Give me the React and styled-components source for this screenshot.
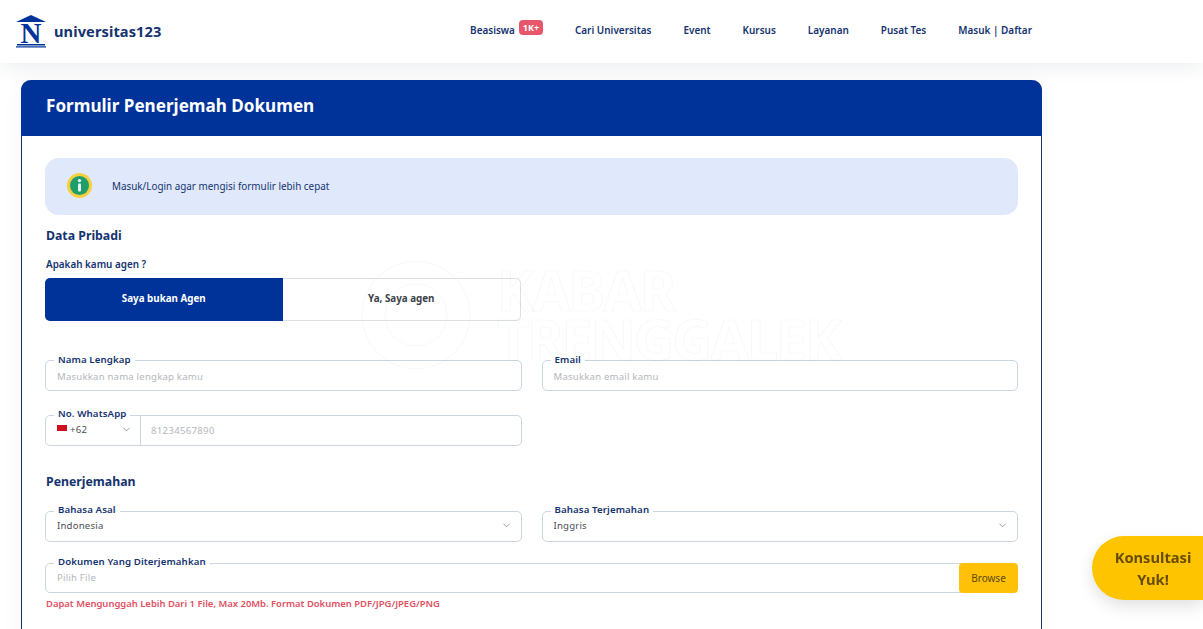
import React from 'react';
import styled, { createGlobalStyle } from 'styled-components';
import { ChevronDown } from 'lucide-react';

const navy = '#14336f';
const blue = '#003399';
const line = '#ccd5e1';

const GlobalStyle = createGlobalStyle`
  html, body {
    margin: 0;
    height: 100%;
    overflow: hidden;
    background: #fff;
    font-family: 'Noto Sans', 'Open Sans', sans-serif;
  }
  * { box-sizing: border-box; }
`;

const Navbar = styled.header`
  height: 63px;
  background: #fff;
  box-shadow: 0 4px 18px rgba(30, 40, 70, 0.08);
  display: flex;
  align-items: center;
  padding: 0 171px 2px 16px;
  position: relative;
  z-index: 2;
`;

const Brand = styled.div`
  display: flex;
  align-items: center;
  gap: 8px;
  font-size: 14.6px;
  font-weight: 700;
  color: ${navy};
  letter-spacing: 0.1px;
`;

const Menu = styled.nav`
  margin: 0 0 2px auto;
  display: flex;
  align-items: center;
  gap: 32px;
`;

const MenuItem = styled.a`
  position: relative;
  padding-right: ${(p) => (p.$withBadge ? 28 : 0)}px;
  font-size: 9.95px;
  font-weight: 600;
  color: ${navy};
`;

const Badge = styled.span`
  position: absolute;
  right: 0;
  top: -3px;
  width: 24px;
  height: 15px;
  border-radius: 4px;
  background: #e8566b;
  color: #fff;
  font-size: 9px;
  font-weight: 700;
  line-height: 15px;
  text-align: center;
`;

const Main = styled.main`
  padding: 17px 0 0 21px;
`;

const Card = styled.section`
  width: 1021px;
  border: 1px solid #17335f;
  border-top: 0;
  border-radius: 10px 10px 0 0;
  box-shadow: 0 0 24px rgba(30, 40, 70, 0.04);
`;

const CardHeader = styled.h1`
  height: 56px;
  margin: 0 -1px;
  padding: 0 25px 6px;
  display: flex;
  align-items: center;
  border-radius: 10px 10px 0 0;
  background: ${blue};
  color: #fff;
  font-size: 17.1px;
  font-weight: 700;
`;

const CardBody = styled.div`
  padding: 22px 23px 60px;
`;

const Alert = styled.div`
  height: 57px;
  display: flex;
  align-items: center;
  gap: 20px;
  padding: 0 0 2px 22px;
  border-radius: 14px;
  background: #e0e8fb;
  color: ${navy};
  font-size: 9.9px;
`;

const SectionTitle = styled.h2`
  margin: ${(p) => p.$top}px 0 0;
  font-size: 12.3px;
  line-height: 16px;
  font-weight: 700;
  color: ${navy};
  padding-left: 1px;
`;

const AgentLabel = styled.div`
  margin: 13px 0 7px 1px;
  font-size: 9.9px;
  line-height: 14px;
  font-weight: 600;
  color: ${navy};
`;

const Toggle = styled.div`
  width: 476px;
  height: 43px;
  display: flex;
  border: 1px solid #dcdfe4;
  border-radius: 5px;
`;

const ToggleOption = styled.div`
  flex: 1;
  margin: ${(p) => (p.$active ? '-1px 0 -1px -1px' : '0')};
  padding-bottom: 2px;
  display: flex;
  align-items: center;
  justify-content: center;
  border-radius: ${(p) => (p.$active ? '5px 0 0 5px' : '0')};
  background: ${(p) => (p.$active ? blue : 'transparent')};
  color: ${(p) => (p.$active ? '#fff' : '#3a3f4a')};
  font-size: 9.8px;
  font-weight: 700;
`;

const Row = styled.div`
  display: grid;
  grid-template-columns: ${(p) => (p.$single ? '1fr' : '1fr 1fr')};
  gap: 20px;
  margin-top: ${(p) => p.$top}px;
`;

const Field = styled.div`
  position: relative;
  height: ${(p) => p.$height || 31}px;
  display: flex;
  align-items: center;
  justify-content: space-between;
  padding: ${(p) => (p.$up ? '0 9px 2px 11px' : '2px 9px 0 11px')};
  border: 1px solid ${line};
  border-radius: 5px;
  font-size: 9.6px;
  letter-spacing: 0.2px;
  color: ${(p) => (p.$filled ? '#4a4f59' : '#b4b7bd')};
`;

const FloatLabel = styled.label`
  position: absolute;
  left: 8px;
  top: ${(p) => (p.$low ? -8 : -9)}px;
  padding: 0 4px;
  background: #fff;
  color: ${navy};
  font-size: 9.7px;
  line-height: 13px;
  font-weight: 600;
  letter-spacing: 0.1px;
  white-space: nowrap;
`;

const PhoneField = styled.div`
  position: relative;
  height: 31px;
  display: flex;
  border: 1px solid ${line};
  border-radius: 5px;
  font-size: 9.6px;
  letter-spacing: 0.2px;
`;

const CountryCode = styled.div`
  width: 95px;
  flex: none;
  display: flex;
  align-items: center;
  gap: 3px;
  padding: 0 8px 2px 11px;
  border-right: 1px solid ${line};
  color: #4a4f59;
  svg:last-child { margin-left: auto; }
`;

const Flag = styled.span`
  width: 10px;
  height: 6px;
  margin-bottom: 3px;
  background: #d0101f;
`;

const PhoneInput = styled.div`
  flex: 1;
  display: flex;
  align-items: center;
  padding-left: 10px;
  color: #b4b7bd;
  letter-spacing: 0.3px;
`;

const BrowseButton = styled.button`
  position: absolute;
  right: -1px;
  top: -1px;
  bottom: -1px;
  width: 59px;
  border: 0;
  border-radius: 4px;
  background: #ffc107;
  color: #5c4a10;
  font: inherit;
  font-size: 10px;
`;

const Hint = styled.p`
  margin: 4px 0 0 1px;
  color: #e0505f;
  font-size: 9.45px;
  line-height: 13px;
  font-weight: 600;
`;

const Watermark = styled.div`
  position: absolute;
  left: 361px;
  top: 260px;
  display: flex;
  gap: 26px;
  pointer-events: none;
`;

const WatermarkText = styled.div`
  margin-top: 5px;
  font-size: 56px;
  line-height: 49px;
  font-weight: 700;
  letter-spacing: -2.3px;
  color: transparent;
  -webkit-text-stroke: 1px rgba(40, 50, 80, 0.035);
`;

const ConsultButton = styled.button`
  position: fixed;
  right: 0;
  top: 536px;
  width: 111px;
  height: 64px;
  padding: 0 11px 0 22px;
  border: 0;
  border-radius: 32px 0 0 32px;
  background: #ffc400;
  box-shadow: 0 6px 16px rgba(0, 0, 0, 0.12);
  color: #664d03;
  font: inherit;
  font-size: 14.7px;
  line-height: 22px;
  font-weight: 700;
  z-index: 3;
`;

function Logo() {
  return (
    <svg width="30" height="37" viewBox="0 -3 30 37">
      <path d="M15 0 L30 7 L0 7 Z" fill={blue} />
      <text x="15" y="28" textAnchor="middle" fontFamily="'Liberation Serif', serif" fontWeight="700" fontSize="29" fill={blue}>N</text>
      <rect x="1" y="29" width="28" height="1.5" fill={blue} />
      <rect x="0" y="31.3" width="30" height="1.2" fill={blue} />
    </svg>
  );
}

function InfoIcon() {
  return (
    <svg width="25" height="25" viewBox="0 0 25 25">
      <circle cx="12.5" cy="12.5" r="12.5" fill="#f4cf3e" />
      <circle cx="12.5" cy="12.5" r="9.5" fill="#1f9d6b" />
      <circle cx="12.5" cy="7.6" r="1.7" fill="#e6f5ef" />
      <rect x="11" y="10.4" width="3" height="8" rx="1" fill="#e6f5ef" />
    </svg>
  );
}

function Arrow() {
  return <ChevronDown size={11} color="#6b7280" strokeWidth={1.5} />;
}

const menuItems = ['Cari Universitas', 'Event', 'Kursus', 'Layanan', 'Pusat Tes', 'Masuk | Daftar'];

export default function App() {
  return (
    <>
      <GlobalStyle />
      <Navbar>
        <Brand>
          <Logo />
          universitas123
        </Brand>
        <Menu>
          <MenuItem $withBadge>
            Beasiswa
            <Badge>1K+</Badge>
          </MenuItem>
          {menuItems.map((item) => (
            <MenuItem key={item}>{item}</MenuItem>
          ))}
        </Menu>
      </Navbar>
      <Main>
        <Card>
          <CardHeader>Formulir Penerjemah Dokumen</CardHeader>
          <CardBody>
            <Alert>
              <InfoIcon />
              Masuk/Login agar mengisi formulir lebih cepat
            </Alert>
            <SectionTitle $top={13}>Data Pribadi</SectionTitle>
            <AgentLabel>Apakah kamu agen ?</AgentLabel>
            <Toggle>
              <ToggleOption $active>Saya bukan Agen</ToggleOption>
              <ToggleOption>Ya, Saya agen</ToggleOption>
            </Toggle>
            <Row $top={39}>
              <Field>
                <FloatLabel $low>Nama Lengkap</FloatLabel>
                Masukkan nama lengkap kamu
              </Field>
              <Field>
                <FloatLabel $low>Email</FloatLabel>
                Masukkan email kamu
              </Field>
            </Row>
            <Row $top={24}>
              <PhoneField>
                <FloatLabel>No. WhatsApp</FloatLabel>
                <CountryCode>
                  <Flag />
                  +62
                  <Arrow />
                </CountryCode>
                <PhoneInput>81234567890</PhoneInput>
              </PhoneField>
            </Row>
            <SectionTitle $top={28}>Penerjemahan</SectionTitle>
            <Row $top={21}>
              <Field $filled $up>
                <FloatLabel>Bahasa Asal</FloatLabel>
                Indonesia
                <Arrow />
              </Field>
              <Field $filled $up>
                <FloatLabel>Bahasa Terjemahan</FloatLabel>
                Inggris
                <Arrow />
              </Field>
            </Row>
            <Row $top={21} $single>
              <Field $height={30} $up>
                <FloatLabel>Dokumen Yang Diterjemahkan</FloatLabel>
                Pilih File
                <BrowseButton>Browse</BrowseButton>
              </Field>
            </Row>
            <Hint>Dapat Mengunggah Lebih Dari 1 File, Max 20Mb. Format Dokumen PDF/JPG/JPEG/PNG</Hint>
          </CardBody>
        </Card>
      </Main>
      <Watermark>
        <svg width="110" height="110" viewBox="0 0 110 110" fill="none" stroke="rgba(40,50,80,0.04)">
          <circle cx="55" cy="55" r="54" />
          <circle cx="55" cy="55" r="31" />
        </svg>
        <WatermarkText>
          KABAR
          <br />
          TRENGGALEK
        </WatermarkText>
      </Watermark>
      <ConsultButton>Konsultasi Yuk!</ConsultButton>
    </>
  );
}
